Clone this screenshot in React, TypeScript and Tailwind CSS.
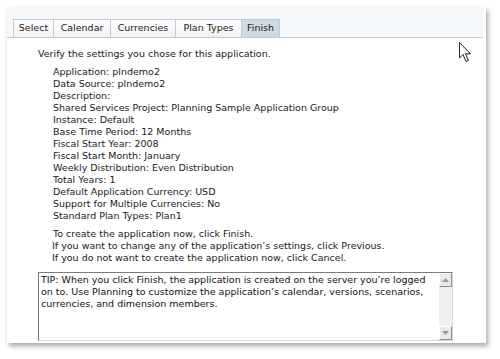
import React from "react";

const settings = [
  "Application: plndemo2",
  "Data Source: plndemo2",
  "Description:",
  "Shared Services Project: Planning Sample Application Group",
  "Instance: Default",
  "Base Time Period: 12 Months",
  "Fiscal Start Year: 2008",
  "Fiscal Start Month: January",
  "Weekly Distribution: Even Distribution",
  "Total Years: 1",
  "Default Application Currency: USD",
  "Support for Multiple Currencies: No",
  "Standard Plan Types: Plan1",
];

const tabs = [
  { label: "Select", w: "w-[41px]" },
  { label: "Calendar", w: "w-[58px]" },
  { label: "Currencies", w: "w-[66px]" },
  { label: "Plan Types", w: "w-[67px]" },
  { label: "Finish", w: "w-[39px]" },
];

function ScrollButton({ up }: { up: boolean }) {
  return (
    <div className="w-[13px] h-[14px] bg-[#ece9e4] border border-t-white border-l-white border-r-[#8a8a8a] border-b-[#8a8a8a] flex items-center justify-center">
      <svg width="7" height="4" viewBox="0 0 7 4">
        {up ? (
          <polygon points="0,4 7,4 3.5,0" fill="#9a9a9a" />
        ) : (
          <polygon points="0,0 7,0 3.5,4" fill="#9a9a9a" />
        )}
      </svg>
    </div>
  );
}

export default function App() {
  return (
    <div
      className="relative w-[500px] h-[359px] bg-white overflow-hidden pt-[7px] pl-[7px]"
      style={{ fontFamily: '"DejaVu Sans", Verdana, sans-serif' }}
    >
      <div className="w-[479px] h-[336px] bg-white shadow-[2px_3px_5px_rgba(0,0,0,0.35)] flex flex-col">
        {/* Tab header */}
        <div className="h-[31px] bg-[#f5f8fb] flex items-end pl-[6px] border-b border-[#c3cad1] mr-[3px]">
          {tabs.map((t) => (
            <div
              key={t.label}
              className={
                t.label === "Finish"
                  ? `${t.w} h-[19px] -mb-px flex items-center justify-center text-[9.5px] text-[#222] bg-[#cddbe6] border border-[#c3cad1]`
                  : `${t.w} h-[19px] -mb-px -mr-px flex items-center justify-center text-[9.5px] text-[#222] bg-gradient-to-b from-white to-[#f1f1f1] border border-[#c3cad1]`
              }
            >
              {t.label}
            </div>
          ))}
        </div>

        {/* Body */}
        <div className="pl-[31px] pt-[10px] text-[9.5px] leading-[12px] text-[#1a1a1a]">
          <div>Verify the settings you chose for this application.</div>
          <div className="pl-[15px] mt-[6px]">
            {settings.map((s) => (
              <div key={s}>{s}</div>
            ))}
          </div>
          <div className="pl-[15px] mt-[6px]">
            <div>To create the application now, click Finish.</div>
            <div className="-ml-px">If you want to change any of the application’s settings, click Previous.</div>
            <div className="-ml-px">If you do not want to create the application now, click Cancel.</div>
          </div>

          {/* Tip box */}
          <div className="mt-[8px] w-[415px] h-[69px] flex border border-[#7a7a7a] border-r-[#d8d8d8] border-b-[#d8d8d8]">
            <div className="flex-1 px-[2px] pt-[1px] text-[9.5px] leading-[12px] text-[#111] whitespace-nowrap">
              <div>TIP: When you click Finish, the application is created on the server you’re logged</div>
              <div>on to. Use Planning to customize the application’s calendar, versions, scenarios,</div>
              <div>currencies, and dimension members.</div>
            </div>
            <div className="w-[13px] flex flex-col justify-between bg-[repeating-conic-gradient(#e8e8e8_0%_25%,#f8f8f8_0%_50%)] bg-[length:2px_2px]">
              <ScrollButton up />
              <ScrollButton up={false} />
            </div>
          </div>
        </div>
      </div>

      {/* mouse pointer */}
      <svg className="absolute left-[459px] top-[42px]" width="13" height="21" viewBox="0 0 13 21">
        <path
          d="M0.5 0.5 L0.5 16 L4 12.5 L7 19.5 L9.5 18.5 L6.5 11.8 L11.5 11.8 Z"
          fill="white"
          stroke="#222"
          strokeWidth="1"
          strokeLinejoin="round"
        />
      </svg>
    </div>
  );
}
